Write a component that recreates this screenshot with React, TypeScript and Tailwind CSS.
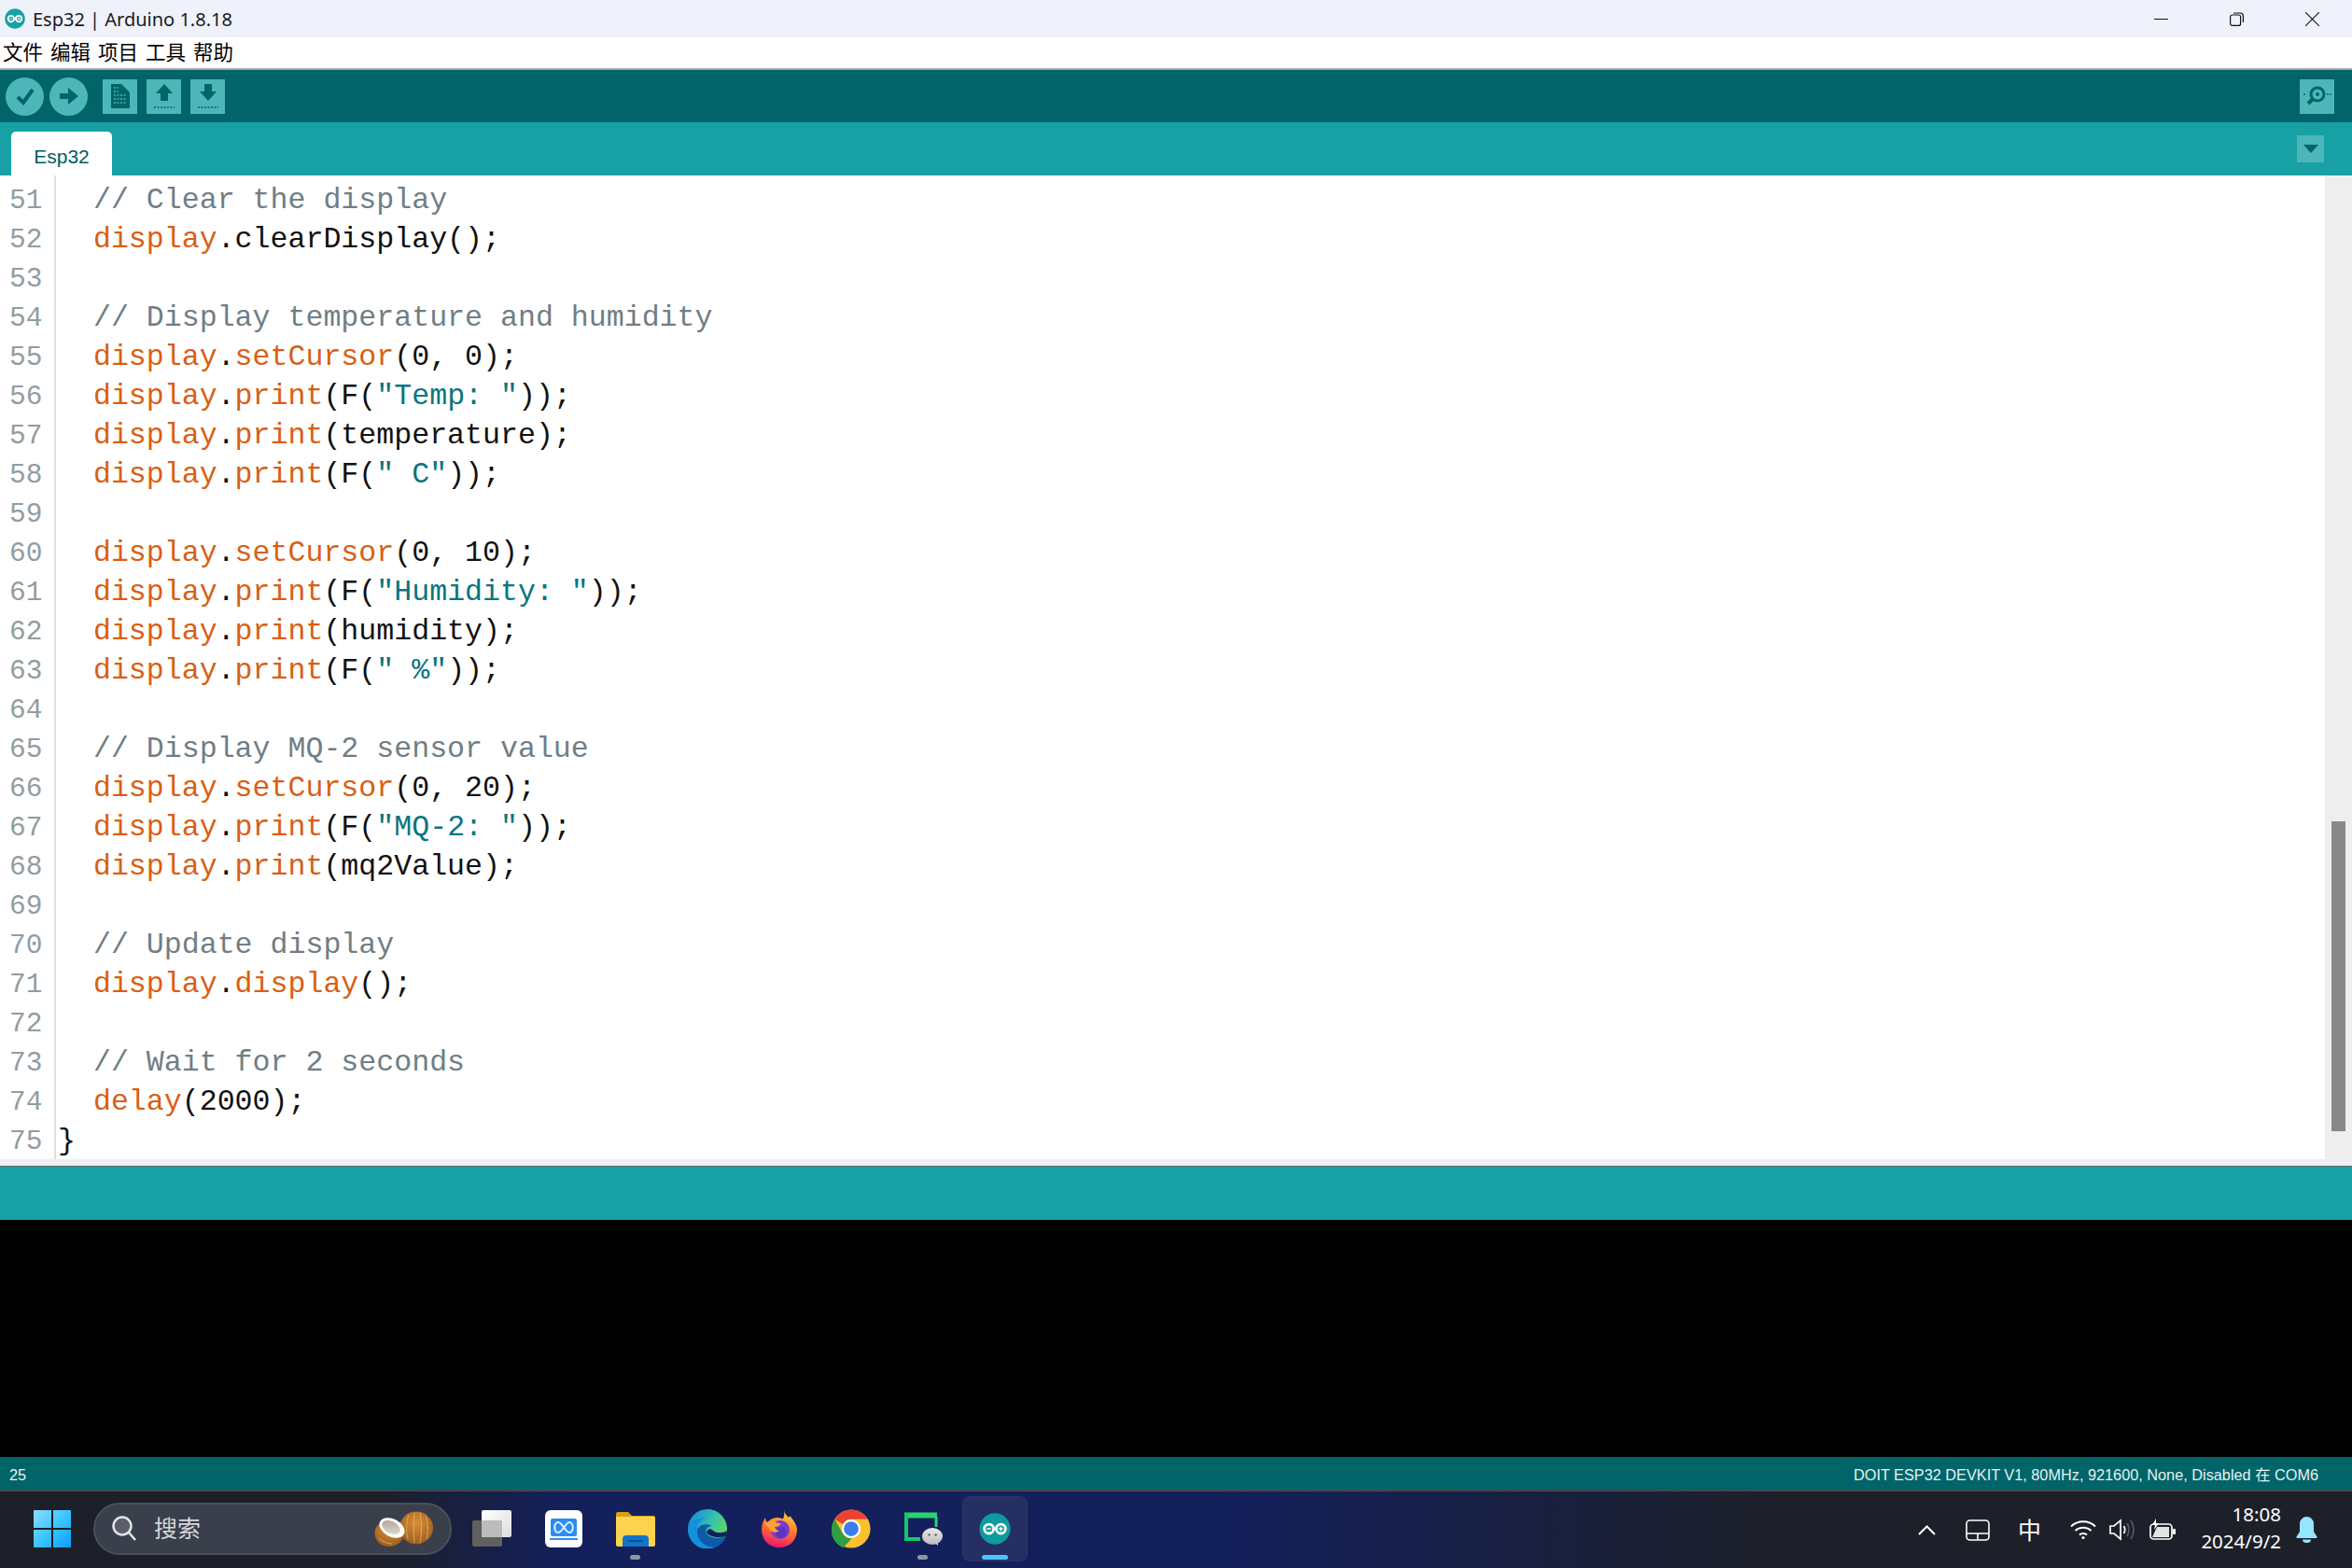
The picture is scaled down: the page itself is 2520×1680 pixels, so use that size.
import React from "react";

const mono = "font-['Liberation_Mono',monospace]";
const cjk = "font-['Noto_Sans','Noto_Sans_CJK_SC',sans-serif]";

type Tok = [string, string];
const cm = (t: string): Tok => ["text-[#6f7e85]", t];
const or = (t: string): Tok => ["text-[#d95f14]", t];
const st = (t: string): Tok => ["text-[#0a7480]", t];
const tx = (t: string): Tok => ["text-[#111111]", t];

const disp = or("display");
const print = [disp, tx("."), or("print")];
const cursor = [disp, tx("."), or("setCursor")];

const code: Tok[][] = [
  [tx("  "), cm("// Clear the display")],
  [tx("  "), disp, tx(".clearDisplay();")],
  [],
  [tx("  "), cm("// Display temperature and humidity")],
  [tx("  "), ...cursor, tx("(0, 0);")],
  [tx("  "), ...print, tx("(F("), st('"Temp: "'), tx("));")],
  [tx("  "), ...print, tx("(temperature);")],
  [tx("  "), ...print, tx("(F("), st('" C"'), tx("));")],
  [],
  [tx("  "), ...cursor, tx("(0, 10);")],
  [tx("  "), ...print, tx("(F("), st('"Humidity: "'), tx("));")],
  [tx("  "), ...print, tx("(humidity);")],
  [tx("  "), ...print, tx("(F("), st('" %"'), tx("));")],
  [],
  [tx("  "), cm("// Display MQ-2 sensor value")],
  [tx("  "), ...cursor, tx("(0, 20);")],
  [tx("  "), ...print, tx("(F("), st('"MQ-2: "'), tx("));")],
  [tx("  "), ...print, tx("(mq2Value);")],
  [],
  [tx("  "), cm("// Update display")],
  [tx("  "), disp, tx("."), or("display"), tx("();")],
  [],
  [tx("  "), cm("// Wait for 2 seconds")],
  [tx("  "), or("delay"), tx("(2000);")],
  [tx("}")],
];

const ArduinoLogo = ({ size, color = "#17a1a5" }: { size: number; color?: string }) => (
  <svg width={size} height={size} viewBox="0 0 48 48">
    <circle cx="24" cy="24" r="23.5" fill={color} />
    <circle cx="15" cy="24" r="7" fill="none" stroke="#fff" strokeWidth="4" />
    <circle cx="33" cy="24" r="7" fill="none" stroke="#fff" strokeWidth="4" />
    <path d="M12 24h6M30 24h6M33 21v6" stroke="#fff" strokeWidth="2" />
  </svg>
);

const RoundBtn = ({ children }: { children: React.ReactNode }) => (
  <div className="w-[41px] h-[41px] rounded-full bg-[#4db6b9] flex items-center justify-center">{children}</div>
);

const SquareBtn = ({ children }: { children: React.ReactNode }) => (
  <div className="w-[37px] h-[37px] bg-[#4db6b9] flex items-center justify-center">{children}</div>
);

const TitleBar = () => (
  <div className="h-[40px] shrink-0 bg-[#eff2fa] flex items-center">
    <div className="ml-[5px] mr-[8px] flex">
      <ArduinoLogo size={22} />
    </div>
    <span className={`${cjk} pt-[2px] text-[20px] text-[#1a1a1a]`}>Esp32 | Arduino 1.8.18</span>
    <div className="ml-auto flex items-center mr-[35px] gap-[66px]">
      <svg width="15" height="15" viewBox="0 0 15 15"><path d="M0 7.5h15" stroke="#111" strokeWidth="1" /></svg>
      <svg width="15" height="15" viewBox="0 0 15 15" fill="none" stroke="#111" strokeWidth="1.2">
        <rect x="0.6" y="3" width="11" height="11.4" rx="2" />
        <path d="M4 1h7.5A3 3 0 0 1 14.4 4v7" />
      </svg>
      <svg width="15" height="15" viewBox="0 0 15 15"><path d="M0 0l15 15M15 0L0 15" stroke="#111" strokeWidth="1.1" /></svg>
    </div>
  </div>
);

const MenuBar = () => (
  <div className={`h-[35px] shrink-0 bg-white border-b-2 border-[#a8a8a8] flex items-center pl-[3px] gap-[8px] text-[21.5px] text-black ${cjk}`}>
    <span>文件</span>
    <span>编辑</span>
    <span>项目</span>
    <span>工具</span>
    <span>帮助</span>
  </div>
);

const Toolbar = () => (
  <div className="h-[56px] shrink-0 bg-[#006468] flex items-center pl-[6px] pr-[19px]">
    <RoundBtn>
      <svg width="24" height="24" viewBox="0 0 24 24"><path d="M4 13l6 6L20 5" fill="none" stroke="#006468" strokeWidth="4" /></svg>
    </RoundBtn>
    <div className="ml-[6px]">
      <RoundBtn>
        <svg width="24" height="24" viewBox="0 0 24 24"><path d="M2 9h9V3l11 9-11 9v-6H2z" fill="#006468" /></svg>
      </RoundBtn>
    </div>
    <div className="ml-[16px] flex gap-[10px]">
      <SquareBtn>
        <svg width="20" height="26" viewBox="0 0 20 26">
          <path d="M0 0h11l9 9v17H0z" fill="#006468" />
          <path d="M3 4h5M3 8h5M3 12h14M3 16h14M3 20h14" stroke="#4db6b9" strokeWidth="1.5" strokeDasharray="2 1.5" />
        </svg>
      </SquareBtn>
      <SquareBtn>
        <svg width="26" height="28" viewBox="0 0 26 28">
          <path d="M13 1l9 10h-5v8H9v-8H4z" fill="#006468" />
          <path d="M2 26h22" stroke="#006468" strokeWidth="1.5" strokeDasharray="2 1.5" />
        </svg>
      </SquareBtn>
      <SquareBtn>
        <svg width="26" height="28" viewBox="0 0 26 28">
          <path d="M9 1h8v8h5l-9 10L4 9h5z" fill="#006468" />
          <path d="M2 26h22" stroke="#006468" strokeWidth="1.5" strokeDasharray="2 1.5" />
        </svg>
      </SquareBtn>
    </div>
    <div className="ml-auto">
      <SquareBtn>
        <svg width="30" height="30" viewBox="0 0 30 30">
          <circle cx="15" cy="13" r="7" fill="none" stroke="#006468" strokeWidth="3" />
          <circle cx="15" cy="13" r="2" fill="#006468" />
          <path d="M10 18l-5 5" stroke="#006468" strokeWidth="4" />
          <path d="M0 13h3M25 13h5" stroke="#006468" strokeWidth="1.5" strokeDasharray="2 1.5" />
        </svg>
      </SquareBtn>
    </div>
  </div>
);

const TabRow = () => (
  <div className="h-[57px] shrink-0 bg-[#17a1a5] flex items-end pl-[12px] pr-[30px]">
    <div className="w-[108px] h-[47px] bg-white rounded-t-[5px] flex items-center justify-center pt-[6px] font-['Liberation_Sans',sans-serif] text-[21px] text-[#005c5f]">
      Esp32
    </div>
    <div className="ml-auto mb-[14px] w-[29px] h-[29px] bg-[#4db6b9] flex items-center justify-center">
      <svg width="16" height="9" viewBox="0 0 16 9"><path d="M0 0h16L8 9z" fill="#006468" /></svg>
    </div>
  </div>
);

const Editor = () => (
  <div className="h-[1054px] shrink-0 bg-white flex overflow-hidden">
    <div className="w-[60px] shrink-0 border-r-2 border-[#e0e0e0] pt-[6px] pl-[10px]">
      {code.map((_, i) => (
        <div key={i} className={`${mono} h-[42px] leading-[42px] text-[29.5px] text-[#929ca0]`}>
          {51 + i}
        </div>
      ))}
    </div>
    <div className="flex-1 pt-[6px] pl-[2px]">
      {code.map((line, i) => (
        <div key={i} className={`${mono} h-[42px] leading-[42px] text-[31.6px] whitespace-pre`}>
          {line.map((t, j) => (
            <span key={j} className={t[0]}>
              {t[1]}
            </span>
          ))}
        </div>
      ))}
    </div>
    <div className="w-[29px] shrink-0 bg-[#eeeeee] pl-[7px] pt-[692px]">
      <div className="w-[15px] h-[332px] bg-[#888888]" />
    </div>
  </div>
);

const Footer = () => (
  <div className="h-[35px] shrink-0 bg-[#006468] flex items-center justify-between pt-[3px] pl-[10px] pr-[36px] font-['Liberation_Sans','Noto_Sans_CJK_SC',sans-serif] text-[16.3px] text-[#e4f1f1]">
    <span>25</span>
    <span>DOIT ESP32 DEVKIT V1, 80MHz, 921600, None, Disabled 在 COM6</span>
  </div>
);

const WinLogo = () => (
  <svg width="40" height="40" viewBox="0 0 40 40">
    <defs>
      <linearGradient id="win" x1="0" y1="0" x2="1" y2="1">
        <stop offset="0" stopColor="#8ddcff" />
        <stop offset="0.5" stopColor="#3cc6ff" />
        <stop offset="1" stopColor="#0f9bff" />
      </linearGradient>
    </defs>
    <path d="M1 0h18v19H0V1a1 1 0 0 1 1-1zM21 0h18a1 1 0 0 1 1 1v18H21zM0 21h19v19H1a1 1 0 0 1-1-1zM21 21h19v18a1 1 0 0 1-1 1H21z" fill="url(#win)" />
  </svg>
);

const Coconuts = () => (
  <svg width="66" height="40" viewBox="0 0 66 40">
    <defs>
      <radialGradient id="nut" cx="0.5" cy="0.35" r="0.75">
        <stop offset="0" stopColor="#d98f35" />
        <stop offset="1" stopColor="#94561a" />
      </radialGradient>
      <linearGradient id="meat" x1="0" y1="0" x2="1" y2="1">
        <stop offset="0" stopColor="#a89c8e" />
        <stop offset="1" stopColor="#e8e2d8" />
      </linearGradient>
    </defs>
    <ellipse cx="46" cy="19" rx="18" ry="17.500" fill="url(#nut)" />
    <path d="M38 5c-3 8-3 18-1 26M44 3c-1 10-1 22 0 32M50 3c2 10 2 22 0 32M56 7c3 8 3 16 1 24" stroke="#edc083" strokeWidth="1" fill="none" opacity="0.65" />
    <ellipse cx="17" cy="25" rx="15.500" ry="14" fill="url(#nut)" />
    <path d="M6 30c3 3 8 6 14 6" stroke="#e0a860" strokeWidth="1" fill="none" />
    <ellipse cx="20" cy="19" rx="14.500" ry="9.500" transform="rotate(28 20 19)" fill="#fffdf6" />
    <ellipse cx="19" cy="18.500" rx="10.500" ry="6.500" transform="rotate(28 19 18.500)" fill="url(#meat)" />
  </svg>
);

const TaskView = () => (
  <svg width="44" height="42" viewBox="0 0 44 42">
    <defs>
      <linearGradient id="tv" x1="0" y1="0" x2="1" y2="1">
        <stop offset="0" stopColor="#ffffff" />
        <stop offset="1" stopColor="#dcdcdc" />
      </linearGradient>
    </defs>
    <rect x="1" y="12" width="32" height="28" rx="2" fill="#606060" />
    <rect x="11" y="1" width="32" height="29" rx="2" fill="url(#tv)" />
    <rect x="11" y="12" width="22" height="18" rx="1" fill="#bcbcbc" />
  </svg>
);

const AppBox = () => (
  <svg width="40" height="40" viewBox="0 0 40 40">
    <rect width="40" height="40" rx="6" fill="#fff" />
    <rect x="6" y="9" width="28" height="19" rx="2" fill="#2a8df2" />
    <path d="M14 13c-5 0-5 11 0 11 4.500 0 8-11 12-11 5 0 5 11 0 11-4 0-7.500-11-12-11z" fill="none" stroke="#dff0ff" strokeWidth="2" />
    <path d="M5 31h30" stroke="#2a8df2" strokeWidth="2" />
  </svg>
);

const FolderIcon = () => (
  <svg width="42" height="38" viewBox="0 0 42 38">
    <path d="M0 3a2 2 0 0 1 2-2h11l4 4h23a2 2 0 0 1 2 2v6H0z" fill="#d9a00e" />
    <path d="M0 6h40a2 2 0 0 1 2 2v28a2 2 0 0 1-2 2H2a2 2 0 0 1-2-2z" fill="#fdd24f" />
    <path d="M7 38V30a4 4 0 0 1 4-4h20a4 4 0 0 1 4 4v8z" fill="#1274c8" />
    <path d="M13 32h16" stroke="#0b5391" strokeWidth="2" />
  </svg>
);

const EdgeIcon = () => (
  <svg width="42" height="42" viewBox="0 0 42 42">
    <defs>
      <linearGradient id="edgeA" x1="0.1" y1="0.1" x2="0.95" y2="0.6">
        <stop offset="0" stopColor="#1a8fd6" />
        <stop offset="0.55" stopColor="#35c1b1" />
        <stop offset="1" stopColor="#62d85a" />
      </linearGradient>
    </defs>
    <circle cx="21" cy="21" r="21" fill="url(#edgeA)" />
    <path d="M0 22C1 13 11 8 20 10c-7 1-10 6-10 12 0 9 8 16 19 19A21 21 0 0 1 0 22z" fill="#1490dc" />
    <path d="M10 24c0-7 9-10 16-6-5 0-8 4-6 8 3 5 13 6 21 3-2 6-7 10-12 12C18 41 10 33 10 24z" fill="#0d5ba8" />
    <path d="M42 23c-5 3-11 3-15 0-3-3-6-2-7 2 3 5 13 6 21 4z" fill="#14205c" />
  </svg>
);

const FirefoxIcon = () => (
  <svg width="38" height="40" viewBox="0 0 38 40">
    <defs>
      <linearGradient id="ff" x1="0.7" y1="0" x2="0.4" y2="1">
        <stop offset="0" stopColor="#ffd83a" />
        <stop offset="0.5" stopColor="#ff7a2b" />
        <stop offset="1" stopColor="#f0146f" />
      </linearGradient>
    </defs>
    <path d="M24 0c1 4 3 6 5 8l1-2c5 5 8 11 8 15 0 11-8 19-19 19S0 32 0 21c0-6 2-10 4-13 0 2 1 4 2 5 2-2 6-5 11-5 2 0 4 .5 6 1.500 1-3 2-6 1-9.500z" fill="url(#ff)" />
    <circle cx="20" cy="21" r="10" fill="#7a3ad0" />
    <circle cx="21" cy="24" r="6" fill="#5b35c0" />
    <path d="M3 14c3 0 6-3 10-2 3 1 6 3 8 2-1 3-5 4-7 4 1 2 2 4 5 4-3 3-9 2-11-2-1-2-3-4-5-6z" fill="#ffa030" />
  </svg>
);

const ChromeIcon = () => (
  <svg width="42" height="42" viewBox="0 0 48 48">
    <circle cx="24" cy="24" r="23.5" fill="#fbc02d" />
    <path d="M24 .5A23.5 23.5 0 0 1 44.4 12.200H24a12 12 0 0 0-10.400 6L3.800 12.400A23.5 23.5 0 0 1 24 .5z" fill="#ea4335" />
    <path d="M3.800 12.400l10 17.600a12 12 0 0 0 10.900 5.800L14 47.300A23.5 23.5 0 0 1 3.800 12.400z" fill="#2f9e44" />
    <circle cx="24" cy="24" r="11.500" fill="#fff" />
    <circle cx="24" cy="24" r="9" fill="#3b7de8" />
  </svg>
);

const WeChatDevIcon = () => (
  <svg width="42" height="36" viewBox="0 0 42 36">
    <defs>
      <linearGradient id="wc" x1="0" y1="0" x2="0" y2="1">
        <stop offset="0" stopColor="#e8e8e8" />
        <stop offset="1" stopColor="#bdbdbd" />
      </linearGradient>
    </defs>
    <path d="M1 3.500h35" stroke="#27d46f" strokeWidth="6" />
    <path d="M3 2v27h15" fill="none" stroke="#16c765" strokeWidth="4" />
    <path d="M35 5v11" stroke="#27d46f" strokeWidth="3" />
    <ellipse cx="31" cy="26" rx="11" ry="9" fill="url(#wc)" />
    <path d="M33 33l4 3v-5z" fill="#c4c4c4" />
    <circle cx="27.500" cy="24.500" r="1.300" fill="#666" />
    <circle cx="34.500" cy="24.500" r="1.300" fill="#666" />
  </svg>
);

const TaskIcon = ({ children, dot, active }: { children: React.ReactNode; dot?: boolean; active?: boolean }) => (
  <div className="w-[77px] h-[84px] relative flex items-center justify-center pb-[3px]">
    {active && <div className="absolute left-[4px] top-[6px] w-[70px] h-[70px] rounded-[8px] bg-[#252f63] border border-[#2a3569]" />}
    <div className="relative flex">{children}</div>
    {dot && <div className="absolute left-[33px] top-[69px] w-[11px] h-[5px] rounded-full bg-[#8f95a8]" />}
    {active && <div className="absolute left-[25px] top-[69px] w-[28px] h-[5px] rounded-full bg-[#4cc2ff]" />}
  </div>
);

const Tray = () => (
  <div className="ml-auto flex items-center text-white">
    <svg width="19" height="11" viewBox="0 0 19 11"><path d="M1 10l8.5-8.5L18 10" fill="none" stroke="#fff" strokeWidth="2" /></svg>
    <svg className="ml-[32px]" width="26" height="23" viewBox="0 0 26 23" fill="none" stroke="#fff" strokeWidth="1.6">
      <rect x="1" y="1" width="24" height="21" rx="3.5" />
      <path d="M1 15h24M13 15v7" />
    </svg>
    <span className={`${cjk} w-[26px] ml-[30px] text-[25px] leading-none`}>中</span>
    <svg className="ml-[30px]" width="28" height="22" viewBox="0 0 28 22" fill="none" stroke="#fff" strokeWidth="2">
      <path d="M1 7.5c7-7 19-7 26 0M5.5 12c4.500-4.500 12.500-4.500 17 0M10 16.500c2-2 6-2 8 0" />
      <circle cx="14" cy="19.500" r="1.600" fill="#fff" stroke="none" />
    </svg>
    <svg className="ml-[14px]" width="28" height="24" viewBox="0 0 28 24" fill="none" strokeWidth="1.700">
      <path d="M1 8h4l7-6v20l-7-6H1z" stroke="#fff" />
      <path d="M15.500 8c1.500 2.500 1.500 5.500 0 8" stroke="#fff" />
      <path d="M19 5c2.500 4 2.500 10 0 14M23 2c4 6 4 14 0 20" stroke="#555a63" />
    </svg>
    <svg className="ml-[15px]" width="28" height="24" viewBox="0 0 28 24" fill="none">
      <rect x="1" y="6" width="23" height="16" rx="3.500" stroke="#fff" strokeWidth="1.700" />
      <path d="M3 20l5-11h13v11z" fill="#e4e4e4" />
      <rect x="25" y="11" width="3" height="6" rx="1" fill="#fff" />
      <path d="M7 0L3 7h3l-1 5 5-7H7z" fill="#fff" />
    </svg>
    <div className={`${cjk} ml-[16px] w-[97px] flex flex-col items-end text-[20.5px] leading-[29px] text-white pb-[4px]`}>
      <span>18:08</span>
      <span>2024/9/2</span>
    </div>
    <svg className="ml-[16px] mr-[37px]" width="23" height="28" viewBox="0 0 23 28">
      <path d="M11.500 0a7.500 7.500 0 0 1 7.500 7.500V16l3.500 5.500a1 1 0 0 1-1 1.500H1.500a1 1 0 0 1-1-1.500L4 16V7.500A7.500 7.500 0 0 1 11.500 0z" fill="#93e6fd" />
      <path d="M7 24.500h9a4.500 3.500 0 0 1-9 0z" fill="#93e6fd" />
    </svg>
  </div>
);

const Taskbar = () => (
  <div className="h-[84px] shrink-0 border-t-2 border-[#45474f] bg-[linear-gradient(90deg,#1d2029_0%,#1d2029_16%,#14205c_24%,#14205c_52%,#1d2029_76%,#1d2029_100%)] flex items-center">
    <div className="ml-[36px] flex pb-[3px]">
      <WinLogo />
    </div>
    <div className="ml-[24px] mb-[3px] w-[384px] h-[56px] rounded-full bg-[#3a3f4c] border-2 border-[#4b4f5b] flex items-center pl-[18px] pr-[16px]">
      <svg width="26" height="28" viewBox="0 0 26 28" fill="none" stroke="#e4e4e4" strokeWidth="2.500">
        <circle cx="11" cy="11" r="9.500" fill="#5b5f6b" />
        <path d="M18 18l7 8" />
      </svg>
      <span className={`${cjk} ml-[19px] text-[25px] text-[#d5d6d8]`}>搜索</span>
      <div className="ml-auto flex">
        <Coconuts />
      </div>
    </div>
    <div className="ml-[4px] flex">
      <TaskIcon><TaskView /></TaskIcon>
      <TaskIcon><AppBox /></TaskIcon>
      <TaskIcon dot><FolderIcon /></TaskIcon>
      <TaskIcon><EdgeIcon /></TaskIcon>
      <TaskIcon><FirefoxIcon /></TaskIcon>
      <TaskIcon><ChromeIcon /></TaskIcon>
      <TaskIcon dot><WeChatDevIcon /></TaskIcon>
      <TaskIcon active><ArduinoLogo size={34} color="#0f9a9e" /></TaskIcon>
    </div>
    <Tray />
  </div>
);

export default function App() {
  return (
    <div className="w-full h-[1680px] flex flex-col bg-black overflow-hidden">
      <TitleBar />
      <MenuBar />
      <Toolbar />
      <TabRow />
      <Editor />
      <div className="h-[8px] shrink-0 bg-[#eeeeee] border-b border-[#666666]" />
      <div className="h-[57px] shrink-0 bg-[#17a1a5]" />
      <div className="flex-1 bg-black" />
      <Footer />
      <Taskbar />
    </div>
  );
}
